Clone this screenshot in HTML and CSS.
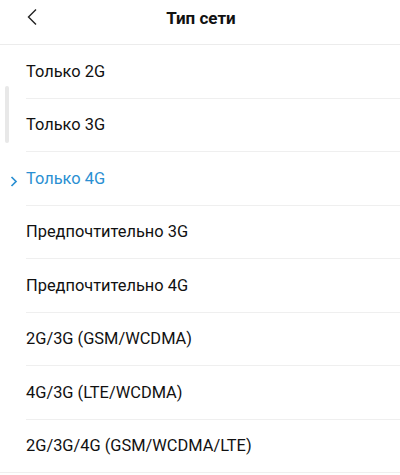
FILE: index.html
```html
<!DOCTYPE html>
<html lang="ru">
<head>
<meta charset="utf-8">
<link rel="stylesheet" href="styles.css">
</head>
<body>
<div class="screen">
  <header class="header">
    <svg class="back" width="12" height="18" viewBox="0 0 12 18"><path d="M10 1.5 L2.5 9 L10 16.5" fill="none" stroke="#222" stroke-width="1.4"/></svg>
    <h1 class="title">Тип сети</h1>
  </header>
  <ul class="list">
    <li class="item">Только 2G</li>
    <li class="item">Только 3G</li>
    <li class="item selected"><svg class="mark" width="8" height="11" viewBox="0 0 8 11"><path d="M1.5 1 L6 5.5 L1.5 10" fill="none" stroke="#2a8fd2" stroke-width="1.7"/></svg>Только 4G</li>
    <li class="item">Предпочтительно 3G</li>
    <li class="item">Предпочтительно 4G</li>
    <li class="item">2G/3G (GSM/WCDMA)</li>
    <li class="item">4G/3G (LTE/WCDMA)</li>
    <li class="item last">2G/3G/4G (GSM/WCDMA/LTE)</li>
  </ul>
  <div class="scrollbar"></div>
</div>
</body>
</html>
```
FILE: styles.css
```css
html, body {
  margin: 0;
  padding: 0;
  background: #fff;
}
body {
  font-family: Roboto, "Noto Sans", sans-serif;
  color: #111;
}
.screen {
  position: relative;
  width: 400px;
  height: 475px;
  overflow: hidden;
}
.header {
  position: relative;
  height: 44px;
  border-bottom: 1px solid #ececec;
  display: flex;
  align-items: center;
  justify-content: center;
}
.back {
  position: absolute;
  left: 26px;
  top: 8px;
}
.title {
  margin: 0 0 9px 2px;
  font-size: 17px;
  font-weight: 700;
  color: #111;
}
.list {
  list-style: none;
  margin: 0;
  padding: 0;
}
.item {
  position: relative;
  height: 52.5px;
  margin-left: 26px;
  border-bottom: 1px solid #efefef;
  display: flex;
  align-items: center;
  font-size: 16.4px;
}
.item.last {
  margin-left: 0;
  padding-left: 26px;
}
.selected {
  color: #2a8fd2;
}
.mark {
  position: absolute;
  left: -16px;
  top: 24px;
}
.scrollbar {
  position: absolute;
  left: 5px;
  top: 86px;
  width: 4px;
  height: 57px;
  border-radius: 2px;
  background: #e8e8e8;
}
```
